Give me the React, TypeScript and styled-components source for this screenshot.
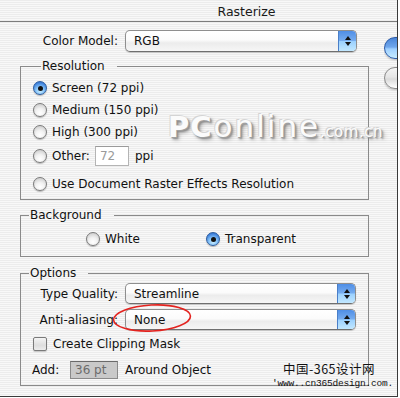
import React from "react";
import styled, { createGlobalStyle } from "styled-components";

const GlobalStyle = createGlobalStyle`
  html, body { margin: 0; padding: 0; background: #ffffff; }
  body { font-family: "DejaVu Sans", "Noto Sans", sans-serif; font-size: 12px; color: #111; }
  * { box-sizing: border-box; }
`;

const Frame = styled.div`
  position: relative;
  width: 398px;
  height: 397px;
  overflow: hidden;
  border-right: 1px solid #3a3a3a;
  border-bottom: 1px solid #3a3a3a;
  background: repeating-linear-gradient(
    to bottom,
    #ececec 0px,
    #ececec 1px,
    #f8f8f8 1px,
    #f8f8f8 2px
  );
  display: flex;
  flex-direction: column;
`;

const TitleBar = styled.div`
  height: 22px;
  flex: none;
  border-bottom: 1px solid #7c7c7c;
  display: flex;
  align-items: center;
  justify-content: center;
  padding-left: 96px;
  padding-top: 2px;
  font-size: 12.5px;
  color: #1a1a1a;
`;

const Body = styled.div`
  flex: 1;
  display: flex;
  flex-direction: row;
`;

const Main = styled.div`
  width: 384px;
  flex: none;
  padding-left: 20px;
  display: flex;
  flex-direction: column;
`;

const Side = styled.div`
  flex: 1;
  overflow: hidden;
  display: flex;
  flex-direction: column;
  gap: 8px;
  padding-top: 15px;
`;

const AquaButton = styled.div<{ $default?: boolean }>`
  width: 60px;
  height: 22px;
  flex: none;
  border-radius: 11px;
  border: 1px solid ${(p) => (p.$default ? "#2a5aa8" : "#8a8a8a")};
  background: ${(p) =>
    p.$default
      ? "linear-gradient(to bottom, #4b86d8 0%, #6fa6ec 45%, #9fd0ff 55%, #c6ebff 100%)"
      : "linear-gradient(to bottom, #f4f4f4 0%, #e6e6e6 45%, #dadada 55%, #ffffff 100%)"};
  box-shadow: 0 1px 2px rgba(0, 0, 0, 0.25);
`;

const FieldRow = styled.div<{ $top?: number; $h?: number }>`
  display: flex;
  align-items: center;
  height: ${(p) => p.$h ?? 22}px;
  margin-top: ${(p) => p.$top ?? 0}px;
`;

const Label = styled.span<{ $w: number; $offset?: number }>`
  width: ${(p) => p.$w}px;
  margin-left: ${(p) => p.$offset ?? 0}px;
  text-align: right;
  padding-right: 7px;
  flex: none;
  white-space: nowrap;
`;

const Popup = styled.div<{ $w: number; $h: number }>`
  position: relative;
  width: ${(p) => p.$w}px;
  height: ${(p) => p.$h}px;
  flex: none;
  display: flex;
  align-items: center;
  border: 1px solid #8e8e8e;
  border-bottom-color: #6f6f6f;
  border-radius: 5px;
  background: linear-gradient(to bottom, #ffffff 0%, #fbfbfb 45%, #ececec 60%, #f6f6f6 100%);
  box-shadow: 0 1px 1px rgba(0, 0, 0, 0.18);
  overflow: hidden;
`;

const PopupText = styled.span`
  flex: 1;
  padding-left: 8px;
  font-size: 12px;
  color: #111;
`;

const PopupArrows = styled.span`
  width: 18px;
  align-self: stretch;
  flex: none;
  border-left: 1px solid #4a7fc8;
  background: linear-gradient(to bottom, #4f8ee6 0%, #76acef 48%, #9bd1ff 52%, #c2e8ff 100%);
  display: flex;
  align-items: center;
  justify-content: center;
`;

const Group = styled.fieldset<{ $top: number; $pt: number; $pb: number; $pl?: number }>`
  width: 349px;
  margin: ${(p) => p.$top}px 0 0 0;
  padding: ${(p) => p.$pt}px 0 ${(p) => p.$pb}px ${(p) => p.$pl ?? 0}px;
  border: 1px solid #8a8a8a;
  min-width: 0;
  display: flex;
  flex-direction: column;
`;

const Legend = styled.legend`
  margin-left: 8px;
  padding: 0 12px 0 1px;
  line-height: 14px;
  font-size: 12px;
  color: #111;
`;

const RadioRow = styled.label<{ $top?: number; $w?: number }>`
  display: flex;
  align-items: center;
  height: 22px;
  margin-top: ${(p) => p.$top ?? 0}px;
  width: ${(p) => (p.$w ? `${p.$w}px` : "auto")};
  flex: none;
  gap: 5px;
  white-space: nowrap;
`;

const Radio = styled.span<{ $on?: boolean }>`
  width: 14px;
  height: 14px;
  flex: none;
  border-radius: 50%;
  border: 1px solid ${(p) => (p.$on ? "#2c5c9e" : "#7a7a7a")};
  background: ${(p) =>
    p.$on
      ? "radial-gradient(circle at 50% 75%, #c8ecff 0%, #8cc8fa 35%, #3f82dc 75%, #2a62b8 100%)"
      : "radial-gradient(circle at 50% 75%, #ffffff 0%, #f2f2f2 40%, #d2d2d2 80%, #b8b8b8 100%)"};
  box-shadow: 0 1px 1px rgba(0, 0, 0, 0.25);
  display: flex;
  align-items: center;
  justify-content: center;
  &::after {
    content: "";
    display: ${(p) => (p.$on ? "block" : "none")};
    width: 5px;
    height: 5px;
    border-radius: 50%;
    background: #111;
  }
`;

const HorizontalRadios = styled.div`
  display: flex;
  flex-direction: row;
  padding-left: 65px;
`;

const TextBox = styled.span<{ $w: number; $h: number; $disabled?: boolean }>`
  width: ${(p) => p.$w}px;
  height: ${(p) => p.$h}px;
  flex: none;
  display: flex;
  align-items: center;
  padding-left: 4px;
  border: 1px solid ${(p) => (p.$disabled ? "#8a8a8a" : "#b4b4b4")};
  border-top-color: ${(p) => (p.$disabled ? "#6a6a6a" : "#9a9a9a")};
  background: ${(p) => (p.$disabled ? "#c9c9c9" : "#ffffff")};
  color: ${(p) => (p.$disabled ? "#6c6c6c" : "#9a9a9a")};
  font-size: 12px;
`;

const Checkbox = styled.span`
  width: 14px;
  height: 14px;
  flex: none;
  border-radius: 2px;
  border: 1px solid #7a7a7a;
  background: linear-gradient(to bottom, #f4f4f4 0%, #dedede 60%, #ececec 100%);
  box-shadow: 0 1px 1px rgba(0, 0, 0, 0.2);
`;

const Inline = styled.span<{ $ml?: number; $w?: number }>`
  margin-left: ${(p) => p.$ml ?? 0}px;
  width: ${(p) => (p.$w ? `${p.$w}px` : "auto")};
  flex: none;
  white-space: nowrap;
`;

const PcWatermark = styled.div`
  position: absolute;
  left: 168px;
  top: 108px;
  display: flex;
  align-items: baseline;
  pointer-events: none;
  color: #fbfbfb;
  text-shadow: -1px -1px 0 #d4d4d4, 1px 1px 0 #a0a0a0, 2px 2px 2px #888888, 3px 3px 4px rgba(0, 0, 0, 0.25);
  font-family: "DejaVu Sans", sans-serif;
`;

const PcBold = styled.span`
  font-weight: bold;
  font-size: 29px;
  letter-spacing: 1px;
`;

const PcOnline = styled.span`
  font-size: 31px;
  letter-spacing: 2px;
  margin-left: 1px;
`;

const PcDomain = styled.span`
  font-size: 15px;
  letter-spacing: 0.5px;
`;

const SiteMark = styled.div`
  position: absolute;
  left: 272px;
  top: 360px;
  display: flex;
  flex-direction: column;
  align-items: flex-end;
  pointer-events: none;
  color: #111;
`;

const SiteCn = styled.span`
  font-family: "Noto Sans CJK SC", "DejaVu Sans", sans-serif;
  font-size: 12.5px;
  line-height: 17px;
  margin-right: 18px;
  letter-spacing: 0.5px;
`;

const SiteUrl = styled.span`
  font-family: "Liberation Mono", "DejaVu Sans Mono", monospace;
  font-size: 9.5px;
  line-height: 14px;
  letter-spacing: -0.2px;
`;

const Ellipse = styled.svg`
  position: absolute;
  left: 110px;
  top: 301px;
  pointer-events: none;
`;

const Arrows = () => (
  <svg width="8" height="12" viewBox="0 0 8 12">
    <path d="M4 1 L7 5 L1 5 Z" fill="#111" />
    <path d="M4 11 L7 7 L1 7 Z" fill="#111" />
  </svg>
);

export default function App() {
  return (
    <>
      <GlobalStyle />
      <Frame>
        <TitleBar>Rasterize</TitleBar>
        <Body>
          <Main>
            <FieldRow $top={8} $h={22}>
              <Label $w={105}>Color Model:</Label>
              <Popup $w={232} $h={22}>
                <PopupText>RGB</PopupText>
                <PopupArrows>
                  <Arrows />
                </PopupArrows>
              </Popup>
            </FieldRow>

            <Group $top={7} $pt={4} $pb={4} $pl={12}>
              <Legend>Resolution</Legend>
              <RadioRow>
                <Radio $on />
                Screen (72 ppi)
              </RadioRow>
              <RadioRow>
                <Radio />
                Medium (150 ppi)
              </RadioRow>
              <RadioRow>
                <Radio />
                High (300 ppi)
              </RadioRow>
              <RadioRow $top={2}>
                <Radio />
                Other:
                <TextBox $w={34} $h={20}>
                  72
                </TextBox>
                <Inline $ml={1}>ppi</Inline>
              </RadioRow>
              <RadioRow $top={6}>
                <Radio />
                Use Document Raster Effects Resolution
              </RadioRow>
            </Group>

            <Group $top={8} $pt={6} $pb={6}>
              <Legend>Background</Legend>
              <HorizontalRadios>
                <RadioRow $w={120}>
                  <Radio />
                  White
                </RadioRow>
                <RadioRow>
                  <Radio $on />
                  Transparent
                </RadioRow>
              </HorizontalRadios>
            </Group>

            <Group $top={9} $pt={3} $pb={5}>
              <Legend>Options</Legend>
              <FieldRow $h={21}>
                <Label $w={104}>Type Quality:</Label>
                <Popup $w={231} $h={21}>
                  <PopupText>Streamline</PopupText>
                  <PopupArrows>
                    <Arrows />
                  </PopupArrows>
                </Popup>
              </FieldRow>
              <FieldRow $top={5} $h={21}>
                <Label $w={104}>Anti-aliasing:</Label>
                <Popup $w={231} $h={21}>
                  <PopupText>None</PopupText>
                  <PopupArrows>
                    <Arrows />
                  </PopupArrows>
                </Popup>
              </FieldRow>
              <FieldRow $top={4} $h={20}>
                <Inline $ml={12} />
                <Checkbox />
                <Inline $ml={6}>Create Clipping Mask</Inline>
              </FieldRow>
              <FieldRow $top={6} $h={20}>
                <Inline $ml={11} $w={38}>Add:</Inline>
                <TextBox $w={48} $h={18} $disabled>
                  36 pt
                </TextBox>
                <Inline $ml={7}>Around Object</Inline>
              </FieldRow>
            </Group>
          </Main>
          <Side>
            <AquaButton $default />
            <AquaButton />
          </Side>
        </Body>

        <PcWatermark>
          <PcBold>PC</PcBold>
          <PcOnline>online</PcOnline>
          <PcDomain>.com.cn</PcDomain>
        </PcWatermark>

        <Ellipse width="84" height="34" viewBox="0 0 84 34">
          <ellipse
            cx="42"
            cy="17"
            rx="38.5"
            ry="13"
            fill="none"
            stroke="#e3231f"
            strokeWidth="1.6"
            transform="rotate(-3 42 17)"
          />
        </Ellipse>

        <SiteMark>
          <SiteCn>中国-365设计网</SiteCn>
          <SiteUrl>'www..cn365design.com.</SiteUrl>
        </SiteMark>
      </Frame>
    </>
  );
}
